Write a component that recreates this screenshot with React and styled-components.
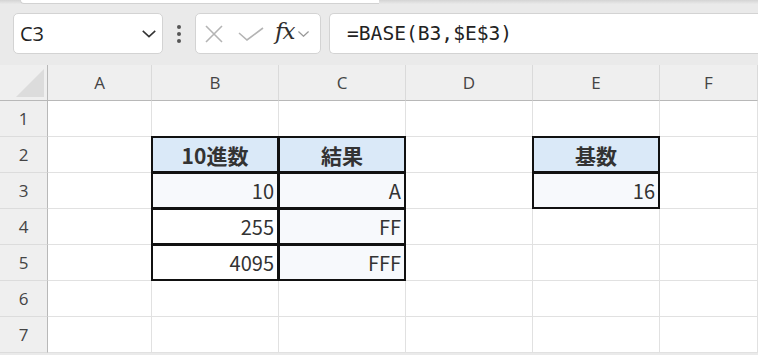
import styled, { createGlobalStyle } from "styled-components";

const GlobalStyle = createGlobalStyle`
  html, body {
    margin: 0;
    padding: 0;
    background: #eaeaea;
    overflow: hidden;
  }
  body {
    font-family: "Noto Sans CJK JP", "Noto Sans", sans-serif;
  }
`;

const Window = styled.div`
  width: 758px;
  height: 355px;
  overflow: hidden;
  background: #eaeaea;
`;

const TopEdge = styled.div`
  height: 4px;
  background: linear-gradient(#d4d4d4, #e9e9e9);
  padding-left: 20px;
`;

const RibbonTail = styled.div`
  width: 358px;
  height: 3px;
  background: #fff;
  border-bottom: 1px solid #d2d2d2;
  border-left: 1px solid #d2d2d2;
  border-bottom-left-radius: 4px;
`;

const FormulaBar = styled.div`
  display: flex;
  align-items: center;
  height: 61px;
  box-sizing: border-box;
  padding: 9px 0 11px 13px;
`;

const Box = styled.div`
  height: 41px;
  box-sizing: border-box;
  background: #fff;
  border: 1px solid #d3d3d3;
  border-radius: 5px;
  display: flex;
  align-items: center;
`;

const NameBox = styled(Box)`
  width: 150px;
  padding: 0 5px 0 6px;
  justify-content: space-between;
  font-family: "Open Sans", "Liberation Sans", sans-serif;
  font-size: 20px;
  color: #222;
`;

const Grip = styled.div`
  width: 32px;
  display: flex;
  flex-direction: column;
  align-items: center;
  gap: 3px;
  span {
    width: 4px;
    height: 4px;
    border-radius: 50%;
    background: #555;
  }
`;

const FxBox = styled(Box)`
  width: 126px;
  padding-left: 9px;
`;

const Fx = styled.span`
  font-family: "DejaVu Serif", "Liberation Serif", serif;
  font-style: italic;
  font-size: 23px;
  color: #2e2e2e;
  margin: -5px 3px 0 11px;
  letter-spacing: -1px;
`;

const FormulaInput = styled(Box)`
  flex: 1;
  margin-left: 8px;
  border-right: none;
  border-radius: 5px 0 0 5px;
  padding-left: 17px;
  font-family: "DejaVu Sans Mono", "Liberation Mono", monospace;
  font-size: 19.6px;
  color: #222;
`;

const Sheet = styled.div`
  display: grid;
  grid-template-columns: 48px 104px 127px 127px 127px 127px 1fr;
  grid-auto-rows: 36px;
  background: #fff;
`;

const ColHead = styled.div`
  background: #efefef;
  border-right: 1px solid #dadada;
  border-bottom: 1px solid #b8b8b8;
  display: flex;
  align-items: center;
  justify-content: center;
  font-family: "Open Sans", "Liberation Sans", sans-serif;
  font-size: 17px;
  color: #444;
`;

const Corner = styled(ColHead)`
  border-right: 1px solid #b8b8b8;
  position: relative;
  &::after {
    content: "";
    position: absolute;
    right: 3px;
    bottom: 3px;
    width: 28px;
    height: 28px;
    background: #dcdcdc;
    clip-path: polygon(100% 0, 100% 100%, 0 100%);
  }
`;

const RowHead = styled.div`
  background: #efefef;
  border-right: 1px solid #b8b8b8;
  border-bottom: 1px solid #dcdcdc;
  display: flex;
  align-items: center;
  justify-content: center;
  font-family: "Open Sans", "Liberation Sans", sans-serif;
  font-size: 17px;
  color: #444;
`;

const Cell = styled.div`
  border-right: 1px solid #e1e1e1;
  border-bottom: 1px solid #e1e1e1;
  background: ${(p) => (p.$head ? "#dae9f8" : p.$tint ? "#f7f9fc" : "#fff")};
  display: flex;
  align-items: center;
  justify-content: ${(p) => (p.$head ? "center" : "flex-end")};
  padding-right: ${(p) => (p.$head ? "0" : "4px")};
  font-size: ${(p) => (p.$head ? "21px" : "20px")};
  font-weight: ${(p) => (p.$head ? 700 : 400)};
  color: ${(p) => (p.$head ? "#333" : "#333")};
  position: ${(p) => (p.$boxed ? "relative" : "static")};
  &::after {
    content: ${(p) => (p.$boxed ? '""' : "none")};
    position: absolute;
    left: -1px;
    top: -1px;
    right: -1px;
    bottom: -1px;
    border: 2px solid #111;
    pointer-events: none;
  }
`;

const Chevron = ({ size = 16, color = "#333" }) => (
  <svg width={size} height={size * 0.6} viewBox="0 0 16 10" fill="none">
    <path d="M1.5 2 L8 8 L14.5 2" stroke={color} strokeWidth="1.6" />
  </svg>
);

const cols = ["A", "B", "C", "D", "E", "F"];

// cell contents by row: [A, B, C, D, E, F]
const rows = [
  [{}, {}, {}, {}, {}, {}],
  [{}, { t: "10進数", head: true, box: true }, { t: "結果", head: true, box: true }, {}, { t: "基数", head: true, box: true }, {}],
  [{}, { t: "10", tint: true, box: true }, { t: "A", tint: true, box: true }, {}, { t: "16", tint: true, box: true }, {}],
  [{}, { t: "255", box: true }, { t: "FF", tint: true, box: true }, {}, {}, {}],
  [{}, { t: "4095", box: true }, { t: "FFF", tint: true, box: true }, {}, {}, {}],
  [{}, {}, {}, {}, {}, {}],
  [{}, {}, {}, {}, {}, {}],
];

export default function App() {
  return (
    <Window>
      <GlobalStyle />
      <TopEdge>
        <RibbonTail />
      </TopEdge>
      <FormulaBar>
        <NameBox>
          <span>C3</span>
          <Chevron size={16} color="#333" />
        </NameBox>
        <Grip>
          <span />
          <span />
          <span />
        </Grip>
        <FxBox>
          <svg width="18" height="18" viewBox="0 0 18 18">
            <path d="M1 1 L17 17 M17 1 L1 17" stroke="#b4b4b4" strokeWidth="1.6" />
          </svg>
          <svg width="26" height="14" viewBox="0 0 26 14" style={{ marginLeft: 15 }}>
            <path d="M1 6 L9 13 L25 1" stroke="#b4b4b4" strokeWidth="1.6" fill="none" />
          </svg>
          <Fx>fx</Fx>
          <Chevron size={13} color="#999" />
        </FxBox>
        <FormulaInput>=BASE(B3,$E$3)</FormulaInput>
      </FormulaBar>
      <Sheet>
        <Corner />
        {cols.map((c) => (
          <ColHead key={c}>{c}</ColHead>
        ))}
        {rows.map((row, r) => [
          <RowHead key={"h" + r}>{r + 1}</RowHead>,
          ...row.map((cell, i) => (
            <Cell key={r + "-" + i} $head={cell.head} $tint={cell.tint} $boxed={cell.box}>
              {cell.t}
            </Cell>
          )),
        ])}
      </Sheet>
    </Window>
  );
}
